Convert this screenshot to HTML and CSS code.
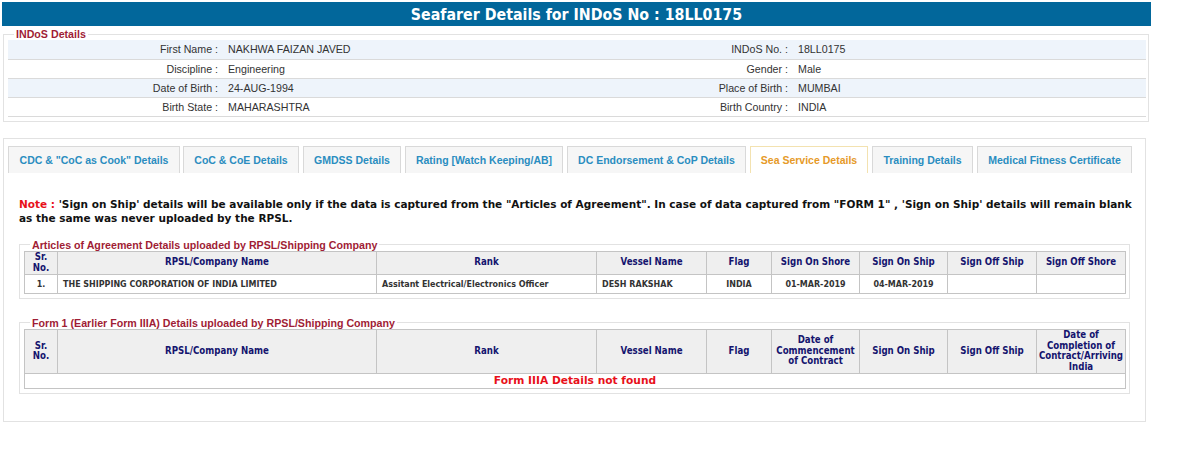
FILE: index.html
```html
<!DOCTYPE html>
<html>
<head>
<meta charset="utf-8">
<link rel="stylesheet" href="styles.css">
</head>
<body>
<div class="page">
  <div class="title-bar">Seafarer Details for INDoS No : 18LL0175</div>

  <fieldset class="indos">
    <legend>INDoS Details</legend>
    <table class="info">
      <colgroup><col class="c1"><col class="c2"><col class="c3"><col class="c4"></colgroup>
      <tr class="alt"><td class="lbl">First Name :</td><td class="val">NAKHWA FAIZAN JAVED</td><td class="lbl">INDoS No. :</td><td class="val">18LL0175</td></tr>
      <tr><td class="lbl">Discipline :</td><td class="val">Engineering</td><td class="lbl">Gender :</td><td class="val">Male</td></tr>
      <tr class="alt"><td class="lbl">Date of Birth :</td><td class="val">24-AUG-1994</td><td class="lbl">Place of Birth :</td><td class="val">MUMBAI</td></tr>
      <tr><td class="lbl">Birth State :</td><td class="val">MAHARASHTRA</td><td class="lbl">Birth Country :</td><td class="val">INDIA</td></tr>
    </table>
  </fieldset>

  <div class="tabs-box">
    <ul class="tabs">
      <li class="tab t1">CDC &amp; "CoC as Cook" Details</li>
      <li class="tab t2">CoC &amp; CoE Details</li>
      <li class="tab t3">GMDSS Details</li>
      <li class="tab t4">Rating [Watch Keeping/AB]</li>
      <li class="tab t5">DC Endorsement &amp; CoP Details</li>
      <li class="tab t6 active">Sea Service Details</li>
      <li class="tab t7">Training Details</li>
      <li class="tab t8">Medical Fitness Certificate</li>
    </ul>
    <div class="panel">
      <p class="note"><span class="note-lbl">Note :</span> 'Sign on Ship' details will be available only if the data is captured from the "Articles of Agreement". In case of data captured from "FORM 1" , 'Sign on Ship' details will remain blank as the same was never uploaded by the RPSL.</p>

      <fieldset class="grid-set first">
        <legend>Articles of Agreement Details uploaded by RPSL/Shipping Company</legend>
        <table class="grid">
          <colgroup><col class="g1"><col class="g2"><col class="g3"><col class="g4"><col class="g5"><col class="g6"><col class="g7"><col class="g8"><col class="g9"></colgroup>
          <tr class="head"><th>Sr.<br>No.</th><th>RPSL/Company Name</th><th>Rank</th><th>Vessel Name</th><th>Flag</th><th>Sign On Shore</th><th>Sign On Ship</th><th>Sign Off Ship</th><th>Sign Off Shore</th></tr>
          <tr class="data"><td class="ctr">1.</td><td>THE SHIPPING CORPORATION OF INDIA LIMITED</td><td>Assitant Electrical/Electronics Officer</td><td>DESH RAKSHAK</td><td class="ctr">INDIA</td><td class="ctr">01-MAR-2019</td><td class="ctr">04-MAR-2019</td><td></td><td></td></tr>
        </table>
      </fieldset>

      <fieldset class="grid-set second">
        <legend>Form 1 (Earlier Form IIIA) Details uploaded by RPSL/Shipping Company</legend>
        <table class="grid">
          <colgroup><col class="g1"><col class="g2"><col class="g3"><col class="g4"><col class="g5"><col class="g6"><col class="g7"><col class="g8"><col class="g9"></colgroup>
          <tr class="head tall"><th>Sr.<br>No.</th><th>RPSL/Company Name</th><th>Rank</th><th>Vessel Name</th><th>Flag</th><th>Date of Commencement of Contract</th><th>Sign On Ship</th><th>Sign Off Ship</th><th>Date of Completion of Contract/Arriving India</th></tr>
          <tr class="data empty"><td colspan="9" class="notfound">Form IIIA Details not found</td></tr>
        </table>
      </fieldset>
    </div>
  </div>
</div>
</body>
</html>
```

FILE: styles.css
```css
* { box-sizing: border-box; }
html, body { margin: 0; padding: 0; background: #fff; }
body { font-family: "Liberation Sans", Arial, sans-serif; font-size: 10.67px; color: #333; }

.page { padding: 2px 0 0 2px; width: 1153px; }

.title-bar {
  width: 1149px;
  height: 24px;
  background: #02679b;
  color: #fff;
  font-family: "DejaVu Sans Condensed", "DejaVu Sans", sans-serif;
  font-stretch: condensed;
  font-weight: bold;
  font-size: 15.8px;
  line-height: 25px;
  text-align: center;
}

.indos {
  margin: 2px 0 0 1px;
  width: 1146px;
  border: 1px solid #e2e2e2;
  padding: 0 2px 4px 4px;
}
.indos legend, .grid-set legend {
  color: #9f1d35;
  font-weight: bold;
  font-size: 10.67px;
  padding: 0 2px;
  margin-left: 6px;
  line-height: 12px;
}
.info { width: 1138px; border-collapse: collapse; table-layout: fixed; }
.info .c1 { width: 212px; }
.info .c2 { width: 300px; }
.info .c3 { width: 270px; }
.info .c4 { width: 356px; }
.info td { height: 19px; padding: 0; border-bottom: 1px solid #dadada; color: #333; }
.info tr.alt td { background: #eef4fb; }
.info td.lbl { text-align: right; padding-right: 2px; }
.info td.val { padding-left: 8px; }

.tabs-box {
  margin: 16px 0 0 1px;
  width: 1143px;
  height: 284px;
  border: 1px solid #e2e2e2;
  padding: 7px 0 0 4px;
}
.tabs { list-style: none; margin: 0; padding: 0; display: flex; height: 27px; }
.tab {
  height: 27px;
  border: 1px solid #d9d9d9;
  border-bottom: none;
  background: #f6f6f6;
  color: #2a8dc0;
  font-weight: bold;
  font-size: 10.5px;
  line-height: 27px;
  text-align: center;
  margin-right: 4px;
  white-space: nowrap;
}
.tab.active { background: #fff; color: #e69a28; border-color: #f3e2b0; }
.t1 { width: 172px; margin-right: 3px; }
.t2 { width: 116px; margin-right: 4px; }
.t3 { width: 98px; }
.t4 { width: 158px; }
.t5 { width: 179px; }
.t6 { width: 118px; }
.t7 { width: 101px; }
.t8 { width: 155px; }

.panel { padding: 0 0 0 8px; }
.note {
  margin: 24px 12px 0 3px;
  font-family: "DejaVu Sans", sans-serif;
  font-weight: bold;
  font-size: 10.5px;
  line-height: 14px;
  color: #111;
}
.note-lbl { color: #e8101a; }

.grid-set {
  margin: 14px 0 0 3px;
  width: 1110px;
  border: 1px solid #e2e2e2;
  padding: 0 3px 4px 4px;
}
.grid-set.second { margin-top: 18px; }
.grid { width: 1101px; border-collapse: collapse; table-layout: fixed; border: 1px solid #a8a8a8;
  font-family: "DejaVu Sans Condensed", "DejaVu Sans", sans-serif; font-stretch: condensed; }
.g1 { width: 33px; } .g2 { width: 319px; } .g3 { width: 220px; } .g4 { width: 110px; }
.g5 { width: 65px; } .g6 { width: 88px; } .g7 { width: 88px; } .g8 { width: 89px; } .g9 { width: 89px; }
.grid th {
  background: #efefef;
  color: #14146e;
  font-size: 9.6px;
  line-height: 10.5px;
  font-weight: bold;
  border: 1px solid #c4c4c4;
  height: 23px;
  padding: 0 1px;
}
.grid tr.tall th { height: 44px; }
.grid td {
  font-size: 8.9px;
  font-weight: bold;
  color: #333;
  border: 1px solid #c4c4c4;
  height: 19px;
  padding: 0 5px;
}
.grid td.ctr { text-align: center; }
.grid tr.empty td { height: 15px; }
.grid td.notfound {
  color: #e8101a;
  font-family: "DejaVu Sans", sans-serif;
  font-stretch: normal;
  font-size: 10.67px;
  text-align: center;
  line-height: 12px;
}
```
